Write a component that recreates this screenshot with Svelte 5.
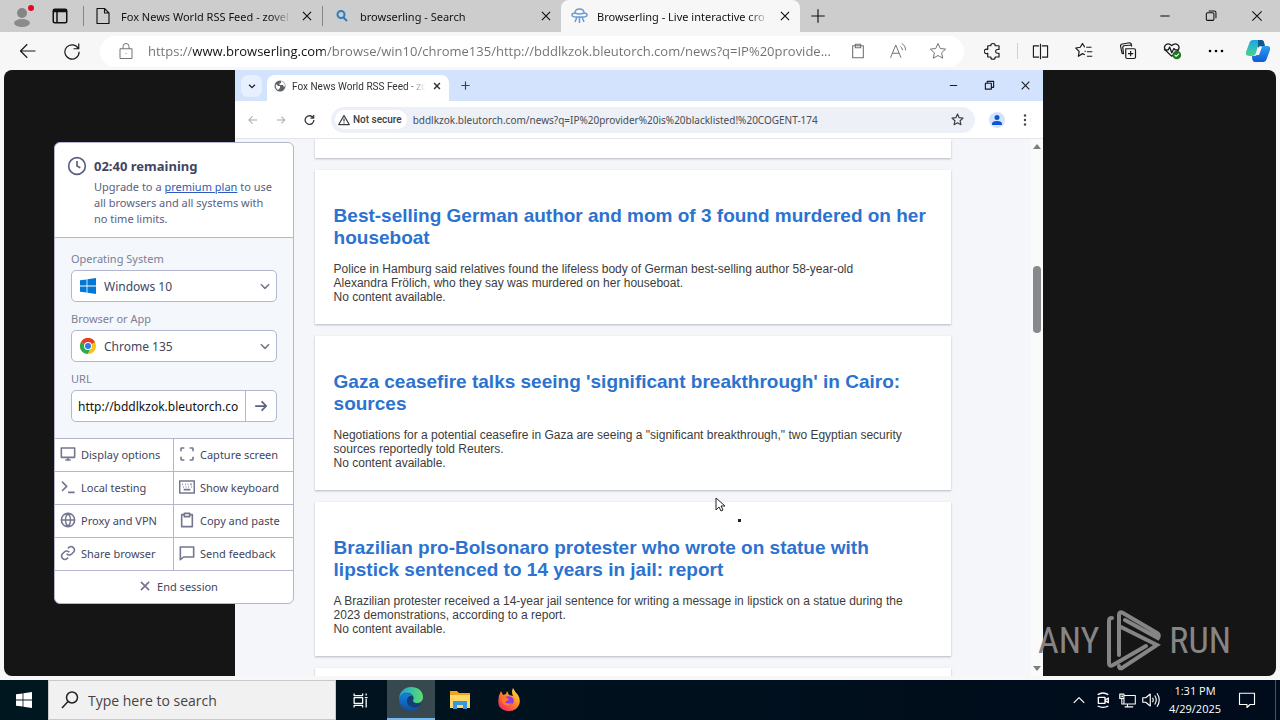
<script lang="ts">
  const articles = [
    {
      title: 'Best-selling German author and mom of 3 found murdered on her houseboat',
      text: 'Police in Hamburg said relatives found the lifeless body of German best-selling author 58-year-old Alexandra Frölich, who they say was murdered on her houseboat.',
    },
    {
      title: "Gaza ceasefire talks seeing 'significant breakthrough' in Cairo: sources",
      text: 'Negotiations for a potential ceasefire in Gaza are seeing a "significant breakthrough," two Egyptian security sources reportedly told Reuters.',
    },
    {
      title: 'Brazilian pro-Bolsonaro protester who wrote on statue with lipstick sentenced to 14 years in jail: report',
      text: 'A Brazilian protester received a 14-year jail sentence for writing a message in lipstick on a statue during the 2023 demonstrations, according to a report.',
    },
  ];

  const icons = {
    close: 'M5 5l14 14M19 5L5 19',
    plus: 'M12 3v18M3 12h18',
    minimize: 'M4 12h16',
    restore: 'M4 8.5a2 2 0 0 1 2-2h9a2 2 0 0 1 2 2v9a2 2 0 0 1-2 2H6a2 2 0 0 1-2-2zM8 3.5h9.5a3 3 0 0 1 3 3V16',
    back: 'M22 12H3M11 3l-9 9 9 9',
    forward: 'M2 12h19M13 4l8 8-8 8',
    reload: 'M20.5 9A9.5 9.5 0 1 0 21.5 13M21 2v7h-7',
    lock: 'M4 9h16v13H4zM8 9V6a4 4 0 0 1 8 0v3M12 15v1',
    page: 'M4 2h10l6 6v14H4zM14 2v6h6',
    panes: 'M3 5a2 2 0 0 1 2-2h14a2 2 0 0 1 2 2v14a2 2 0 0 1-2 2H5a2 2 0 0 1-2-2zM3 5h18M3 6h18M8 6v15',
    clipboard: 'M4 4h16v18H4zM8 2h8v5H8z',
    aloud: 'M2 21L9 4l7 17M4.500 15h9M15 6a6 6 0 0 1 3 5M17 2a10 10 0 0 1 5 9',
    star: 'M12 2l3 6.700 7.200.8-5.400 4.900 1.500 7.200L12 18l-6.300 3.600 1.500-7.200L1.800 9.500 9 8.700z',
    puzzle: 'M5 5h4a3 3 0 1 1 6 0h5v5h-2a2.500 2.500 0 0 0 0 5h2v5h-5a3 3 0 0 1-6 0H5v-5a3 3 0 1 1 0-5z',
    split: 'M10 4H2v16h8M14 4h8v16h-8M12 1v22',
    favorites: 'M22 7h-7M23 13h-7M23 19h-7M13 17l-3-1.500L4.500 19l1-6.500L1 8l6-1 3-5 3 5M14 12l-1 1',
    collections: 'M9 9h11a2 2 0 0 1 2 2v9a2 2 0 0 1-2 2h-9a2 2 0 0 1-2-2zM15.500 12v7M12 15.500h7M6 16l-2-1L2 5l1-2 11-2 2 1 1 4M6 16L5 7l1-2 11-1',
    heart: 'M12 20l-9-9C-.5 5 6-.5 12 5c6-5.500 12.500 0 9 6l-9 9M1 11h6l2-4 3 8 3-6 2 2h5',
    down: 'M5 9l7 7 7-7',
    up: 'M3 17l9-9 9 9',
    clock: 'M22 12a10 10 0 1 1-20 0a10 10 0 0 1 20 0zM12 6v6l4 2',
    display: 'M2 3h20v14H2zM12 17v4M8 21h8',
    capture: 'M8 3H4a1 1 0 0 0-1 1v4M16 3h4a1 1 0 0 1 1 1v4M21 16v4a1 1 0 0 1-1 1h-4M3 16v4a1 1 0 0 0 1 1h4',
    terminal: 'M3 4l7 7-7 7M12 20h10',
    keyboard: 'M1 3h22v18H1zM5 8h1M9 8h1M13 8h1M17 8h2M6 12h1M10 12h1M14 12h1M18 12h1M7 16h10',
    globe: 'M22 12a10 10 0 1 1-20 0a10 10 0 0 1 20 0zM2 12h20M12 2c5 6 5 14 0 20c-5-6-5-14 0-20z',
    paste: 'M8 4H4v18h16V4h-4M8 2h8v5H8z',
    link: 'M10 13a5 5 0 0 0 7.500.5l3-3a5 5 0 0 0-7-7L11.800 5M14 11a5 5 0 0 0-7.500-.5l-3 3a5 5 0 0 0 7 7l1.700-1.700',
    feedback: 'M2 3h20v15H7l-5 4z',
    warning: 'M12 3L1.500 21h21zM12 9v6M12 17v2',
    windowStack: 'M3 7h13v13H3zM7 7V3h14v13h-5',
    monitor: 'M7 5h16v12H7zM12 17v4M8 21h12M1 3h6v6H1zM4 9v8h3M3 5v2M5 5v2',
    volume: 'M1 9h4l6-5v16l-6-5H1zM14 9q2 3 0 6M17 6q4 6 0 12M20 3q6 9 0 18',
    record: 'M5 8h10v9H5zM15 12l5-3v7l-5-3M4 4q8-5 16 0M4 21q8 4 16 0',
    taskView: 'M3 2v3h12V2M3 22v-3h12v3M3 8h12v8H3zM20 2v3M20 10v12M18 8h4',
    notice: 'M2 3h20v15h-6l-4 4v-4H2z',
  };

  type IconName = keyof typeof icons;

  const tools: { icon: IconName; label: string }[] = [
    { icon: 'display', label: 'Display options' },
    { icon: 'capture', label: 'Capture screen' },
    { icon: 'terminal', label: 'Local testing' },
    { icon: 'keyboard', label: 'Show keyboard' },
    { icon: 'globe', label: 'Proxy and VPN' },
    { icon: 'paste', label: 'Copy and paste' },
    { icon: 'link', label: 'Share browser' },
    { icon: 'feedback', label: 'Send feedback' },
  ];

  let address = $state('https://www.browserling.com/browse/win10/chrome135/http://bddlkzok.bleutorch.com/news?q=IP%20provide...');
  let remoteAddress = $state('bddlkzok.bleutorch.com/news?q=IP%20provider%20is%20blacklisted!%20COGENT-174');
  let url = $state('http://bddlkzok.bleutorch.com/news?q=IP%20provider');
  let os = $state('Windows 10');
  let browser = $state('Chrome 135');
</script>

{#snippet icon(name: IconName, size = 16, weight = 1.5)}
  <svg class="icon" width={size} height={size} viewBox="0 0 24 24" stroke-width={weight} aria-hidden="true">
    <path d={icons[name]} />
  </svg>
{/snippet}

<div class="desktop">
  <header class="tab-bar">
    <button class="profile" aria-label="Profile">
      <svg width="20" height="22" viewBox="0 0 20 22">
        <circle cx="8" cy="8" r="5" fill="#858585" />
        <ellipse cx="8" cy="18" rx="8" ry="4" fill="#8b8b8b" />
        <circle cx="17" cy="3" r="3" fill="#e00b1c" />
      </svg>
    </button>
    <button class="tab-actions" aria-label="Tab actions">{@render icon('panes', 18, 2)}</button>
    <div class="tab">
      {@render icon('page', 18, 1.5)}
      <span class="tab-title">Fox News World RSS Feed - zovel</span>
      <button aria-label="Close tab">{@render icon('close', 14, 2)}</button>
    </div>
    <div class="tab">
      <svg class="bing" width="12" height="12" viewBox="0 0 12 12"><circle cx="5" cy="4.500" r="3.500" /><path d="M7.500 7.500L11 11" /></svg>
      <span class="tab-title">browserling - Search</span>
      <button aria-label="Close tab">{@render icon('close', 14, 2)}</button>
    </div>
    <div class="tab active">
      <svg class="ufo" width="17" height="16" viewBox="0 0 17 16">
        <path d="M4 5q0-4 4.500-4T13 5q3 0 3 2t-4 2H5Q1 9 1 7t3-2zM4 5q4.500 2 9 0M6 9l-2 5M8.500 9v6M11 9l2 5" />
      </svg>
      <span class="tab-title">Browserling - Live interactive cro</span>
      <button aria-label="Close tab">{@render icon('close', 14, 2)}</button>
    </div>
    <button class="new-tab" aria-label="New tab">{@render icon('plus', 18, 1.5)}</button>
    <div class="window-controls">
      <button aria-label="Minimize">{@render icon('minimize', 14, 1.8)}</button>
      <button aria-label="Restore">{@render icon('restore', 14, 1.8)}</button>
      <button aria-label="Close">{@render icon('close', 16, 1.6)}</button>
    </div>
  </header>

  <div class="toolbar">
    <button aria-label="Back">{@render icon('back', 18, 1.6)}</button>
    <button aria-label="Refresh">{@render icon('reload', 18, 1.6)}</button>
    <div class="address">
      <button class="site-info" aria-label="Site information">{@render icon('lock', 18, 1.3)}</button>
      <input class="address-input" aria-label="Address" bind:value={address} />
      <button aria-label="Clipboard">{@render icon('clipboard', 16, 1.6)}</button>
      <button aria-label="Read aloud">{@render icon('aloud', 18, 1.3)}</button>
      <button aria-label="Add to favorites">{@render icon('star', 18, 1.3)}</button>
    </div>
    <button class="extensions" aria-label="Extensions">{@render icon('puzzle', 18, 1.6)}</button>
    <button aria-label="Split screen">{@render icon('split', 17, 1.6)}</button>
    <button aria-label="Favorites">{@render icon('favorites', 18, 1.6)}</button>
    <button aria-label="Collections">{@render icon('collections', 18, 1.6)}</button>
    <button aria-label="Browser essentials">
      <svg width="19" height="18" viewBox="0 0 26 25" class="icon">
        <path d={icons.heart} stroke-width="1.800" />
        <circle cx="19" cy="18" r="6" fill="#1b7a1b" stroke="none" />
        <path d="M16 18l2 2 4-4" stroke="#fff" stroke-width="1.500" />
      </svg>
    </button>
    <button aria-label="More">
      <svg width="16" height="4" viewBox="0 0 16 4"><circle cx="2" cy="2" r="1.300" /><circle cx="8" cy="2" r="1.300" /><circle cx="14" cy="2" r="1.300" /></svg>
    </button>
    <button class="copilot" aria-label="Copilot">
      <svg width="24" height="22" viewBox="0 0 24 22">
        <defs>
          <linearGradient id="cpA" x1="0" y1="0" x2="0" y2="1"><stop offset="0" stop-color="#19a6e8" /><stop offset="1" stop-color="#4cd38c" /></linearGradient>
          <linearGradient id="cpB" x1="0" y1="0" x2="0" y2="1"><stop offset="0" stop-color="#2d9ff0" /><stop offset="1" stop-color="#0f5ad8" /></linearGradient>
        </defs>
        <path d="M7 0h8q3 0 3 4l-3 1q-3 0-4 4l-1 4q-1 3-4 3H3q-4 0-3-4L3 4q1-4 4-4z" fill="url(#cpA)" />
        <path d="M12 0h4q2 0 3 6h-4q-2 0-3 2z" fill="#12578f" />
        <path d="M17 22H9q-3 0-3-6h2q3 0 4-3l1-4q1-3 4-3h4q4 0 3 4l-3 8q-1 4-4 4z" fill="url(#cpB)" />
        <path d="M13 7h3l-3 8H9q2-1 2-3z" fill="#f7f7f7" />
      </svg>
    </button>
  </div>

  <main class="stage">
    <section class="remote" aria-label="Remote browser">
      <div class="remote-tabs">
        <button class="tab-search" aria-label="Search tabs">{@render icon('down', 10, 3)}</button>
        <div class="remote-tab">
          <svg width="12" height="12" viewBox="0 0 12 12">
            <circle cx="6" cy="6" r="5.500" fill="#5f6368" />
            <path d="M2 4l2 2h2v2l-2 2q-3-2-2-6zM7 1v2L5 4l1 1h3l1 2 1-1Q11 2 7 1z" fill="#fff" />
          </svg>
          <span class="tab-title">Fox News World RSS Feed - zo</span>
          <button aria-label="Close tab">{@render icon('close', 10, 3.500)}</button>
        </div>
        <button class="remote-new" aria-label="New tab">{@render icon('plus', 11, 2.500)}</button>
        <div class="remote-controls">
          <button aria-label="Minimize">{@render icon('minimize', 11, 2.500)}</button>
          <button aria-label="Restore">{@render icon('windowStack', 11, 2.500)}</button>
          <button aria-label="Close">{@render icon('close', 13, 2)}</button>
        </div>
      </div>
      <div class="remote-bar">
        <button class="dim" aria-label="Back">{@render icon('back', 10, 2.500)}</button>
        <button class="dim" aria-label="Forward">{@render icon('forward', 10, 2.500)}</button>
        <button aria-label="Reload">{@render icon('reload', 11, 3)}</button>
        <div class="omnibox">
          <button class="chip">{@render icon('warning', 12, 2.500)}Not secure</button>
          <input aria-label="Address" bind:value={remoteAddress} />
          <button class="bookmark" aria-label="Bookmark">{@render icon('star', 13, 2.200)}</button>
        </div>
        <button class="account" aria-label="Account">
          <svg width="16" height="16" viewBox="0 0 16 16"><circle cx="8" cy="8" r="8" fill="#d3e3fd" /><circle cx="8" cy="5.500" r="2.500" fill="#0b57d0" /><path d="M3 13v-1q0-3 5-3t5 3v1z" fill="#0b57d0" /></svg>
        </button>
        <button aria-label="Menu">
          <svg width="4" height="12" viewBox="0 0 4 12" fill="#444"><circle cx="2" cy="1.500" r="1.200" /><circle cx="2" cy="6" r="1.200" /><circle cx="2" cy="10.500" r="1.200" /></svg>
        </button>
      </div>
      <div class="remote-view">
        <div class="feed">
          <article class="tail"></article>
          {#each articles as article}
            <article>
              <h2><a href="#top">{article.title}</a></h2>
              <p>{article.text}<br />No content available.</p>
            </article>
          {/each}
          <article class="next"></article>
        </div>
        <div class="scrollbar">
          <svg width="8" height="5" viewBox="0 0 8 5"><path d="M0 5l4-5 4 5z" /></svg>
          <div class="track"><div class="thumb"></div></div>
          <svg width="8" height="5" viewBox="0 0 8 5"><path d="M0 0l4 5 4-5z" /></svg>
        </div>
      </div>
      <svg class="pointer" width="28" height="28" viewBox="0 0 28 28">
        <path d="M1 1v12l3-3 2 4 2-1-2-4h4z" fill="#fff" stroke="#222" />
        <rect x="23" y="22" width="3" height="3" fill="#222" />
      </svg>
    </section>

    <aside class="panel">
      <div class="session">
        {@render icon('clock', 20, 2)}
        <div>
          <strong>02:40 remaining</strong>
          <p>Upgrade to a <a href="#plan">premium plan</a> to use all browsers and all systems with no time limits.</p>
        </div>
      </div>
      <form class="settings" onsubmit={(e) => e.preventDefault()}>
        <label for="os">Operating System</label>
        <div class="field">
          <svg class="brand" width="16" height="16" viewBox="0 0 16 16" fill="#0078d4"><path d="M0 2.300L6.600 1.400v6.200H0zM7.400 1.300L16 0v7.600H7.400zM0 8.400h6.600v6.200L0 13.700zM7.400 8.400H16V16l-8.600-1.300z" /></svg>
          <select id="os" bind:value={os}><option>Windows 10</option><option>Windows 11</option></select>
          <span class="caret">{@render icon('down', 14, 2.800)}</span>
        </div>
        <label for="browser">Browser or App</label>
        <div class="field">
          <svg class="brand" width="16" height="16" viewBox="0 0 16 16">
            <circle cx="8" cy="8" r="8" fill="#fbc116" />
            <path d="M8 8L1 4a8 8 0 0 1 14 0z" fill="#e33b2e" />
            <path d="M8 8L1 4a8 8 0 0 0 6.500 12L11 10z" fill="#2da94f" />
            <circle cx="8" cy="8" r="4" fill="#fff" />
            <circle cx="8" cy="8" r="3" fill="#2a7de1" />
          </svg>
          <select id="browser" bind:value={browser}><option>Chrome 135</option><option>Chrome 134</option></select>
          <span class="caret">{@render icon('down', 14, 2.800)}</span>
        </div>
        <label for="url">URL</label>
        <div class="url-field">
          <input id="url" type="text" bind:value={url} />
          <button aria-label="Go">{@render icon('forward', 14, 3)}</button>
        </div>
      </form>
      <div class="tools">
        {#each tools as tool}
          <button>{@render icon(tool.icon, 16, 2.4)}{tool.label}</button>
        {/each}
        <button class="end">{@render icon('close', 14, 2.800)}End session</button>
      </div>
    </aside>

    <div class="watermark">
      <span>ANY</span>
      <svg width="54" height="62" viewBox="0 0 54 62">
        <path d="M5 8Q2 8 2 11v42q0 4 4 2l33-19" />
        <path d="M12 45V5q0-4 4-2l34 20q3 2 1 5l-33-18" />
        <path d="M14 17l36 18L15 58q-3 1-3-2" />
      </svg>
      <span>RUN</span>
    </div>
  </main>

  <footer class="taskbar">
    <button class="start" aria-label="Start">
      <svg width="16" height="16" viewBox="0 0 16 16" fill="#fff"><path d="M0 2.300L6.600 1.400v6.200H0zM7.400 1.300L16 0v7.600H7.400zM0 8.400h6.600v6.200L0 13.700zM7.400 8.400H16V16l-8.600-1.300z" /></svg>
    </button>
    <label class="search">
      <svg class="icon" width="18" height="18" viewBox="0 0 18 18" stroke-width="1.500"><circle cx="11" cy="6.500" r="5.500" /><path d="M7 10.500L1 17" /></svg>
      <input type="text" placeholder="Type here to search" aria-label="Search" />
    </label>
    <button class="app" aria-label="Task View">{@render icon('taskView', 17, 1.8)}</button>
    <button class="app running" aria-label="Edge">
      <svg width="24" height="24" viewBox="0 0 24 24">
        <defs>
          <linearGradient id="edA" x1="0" y1="0" x2="1" y2="0"><stop offset="0" stop-color="#1d9fe0" /><stop offset="1" stop-color="#5be06a" /></linearGradient>
          <linearGradient id="edB" x1="0" y1="0" x2="0" y2="1"><stop offset="0" stop-color="#1583d8" /><stop offset="1" stop-color="#0f4fa5" /></linearGradient>
        </defs>
        <path d="M0 11C1 4 6 0 12 0c7 0 12 4 12 10 0 4-3 6-6 6-3 0-5-1-4-3 1-1 1-2 0-4C11 4 3 5 0 11z" fill="url(#edA)" />
        <path d="M0 11C3 5 11 5 14 9c-4-1-6 2-6 5 0 5 6 8 13 5-3 5-10 6-15 3-4-2-6-6-6-11z" fill="url(#edB)" />
        <path d="M8 14c0-3 2-5 5-5 2 2 0 3 1 5 1 3 5 3 8 2-1 4-6 6-9 4-3-1-5-3-5-6z" fill="#123f78" />
      </svg>
    </button>
    <button class="app" aria-label="File Explorer">
      <svg width="22" height="20" viewBox="0 0 22 20">
        <path d="M1 1h7l2 2h11v15H1z" fill="#f0a51c" />
        <path d="M1 5h20v13H1z" fill="#ffd866" />
        <path d="M4 19v-8h14v8h-4v-4H8v4z" fill="#3a96dd" />
      </svg>
    </button>
    <button class="app" aria-label="Firefox">
      <svg width="22" height="24" viewBox="0 0 22 24">
        <defs><linearGradient id="ff" x1="1" y1="0" x2="0.200" y2="1"><stop offset="0" stop-color="#fff04a" /><stop offset="0.500" stop-color="#ff8a1f" /><stop offset="1" stop-color="#f0246e" /></linearGradient></defs>
        <path d="M3 3l2 4 3-1 1-3 2 4 4 1q-2-4 0-8 2 4 5 7 3 5 1 10-3 6-10 6T1 18Q-1 10 3 3z" fill="url(#ff)" />
        <path d="M7 9q5-2 8 1 2 4-1 6-4 2-7-1l-1-3 4-1z" fill="#8a3be2" />
        <path d="M4 10q3-2 5 0l2 2-4 2q4 3 7 0-2 5-7 3-4-2-3-7z" fill="#ff7a22" />
      </svg>
    </button>
    <div class="tray">
      <button aria-label="Show hidden icons">{@render icon('up', 14, 2)}</button>
      <button aria-label="Meet now">{@render icon('record', 16, 2)}</button>
      <button aria-label="Network">{@render icon('monitor', 17, 1.500)}</button>
      <button aria-label="Volume">{@render icon('volume', 18, 1.500)}</button>
      <button class="clock"><span>1:31 PM</span><span>4/29/2025</span></button>
      <button class="notifications" aria-label="Notifications">{@render icon('notice', 18, 1.500)}</button>
    </div>
  </footer>
</div>

<style>
  :global(body) {
    background: #f7f7f7;
  }

  .desktop {
    display: flex;
    flex-direction: column;
    height: 100vh;
    overflow: hidden;
    font-family: "Noto Sans", "Open Sans", sans-serif;
    font-size: 11px;
    color: #1a1a1a;
  }

  .desktop :global(*) {
    box-sizing: border-box;
  }

  button, input, select {
    font: inherit;
    color: inherit;
    background: none;
    border: 0;
    padding: 0;
    margin: 0;
    min-width: 0;
    outline: none;
  }

  button {
    display: flex;
    align-items: center;
    justify-content: center;
    flex-shrink: 0;
  }

  svg {
    flex-shrink: 0;
  }

  .icon {
    fill: none;
    stroke: currentColor;
    stroke-linejoin: round;
  }

  .tab-bar {
    display: flex;
    align-items: center;
    height: 32px;
    background: #cdcdcd;
    color: #111;
  }

  .profile {
    width: 48px;
  }

  .tab-actions {
    width: 24px;
    margin-right: 11px;
  }

  .tab {
    display: flex;
    align-items: center;
    flex: 0 1 239px;
    height: 20px;
    min-width: 0;
    padding: 0 8px 0 10px;
    gap: 9px;
    border-left: 1px solid #858585;
  }

  .tab.active {
    height: 32px;
    background: #f7f7f7;
    border-left: 0;
    border-radius: 8px 8px 0 0;
  }

  .tab-title {
    flex: 1;
    overflow: hidden;
    white-space: nowrap;
    mask-image: linear-gradient(to right, #000 calc(100% - 20px), transparent);
  }

  .bing, .ufo {
    fill: none;
    stroke: #2f7dbd;
    stroke-width: 2;
    margin: 0 3px;
  }

  .ufo {
    stroke: #6d9bd1;
    stroke-width: 1.5;
    margin: 0;
  }

  .new-tab {
    width: 36px;
  }

  .window-controls {
    display: flex;
    margin-left: auto;
  }

  .window-controls button {
    width: 46px;
  }

  .toolbar {
    display: flex;
    align-items: center;
    height: 38px;
    padding: 0 2px 0 6px;
    background: #f7f7f7;
  }

  .toolbar button {
    width: 44px;
    height: 30px;
  }

  .address {
    display: flex;
    flex: 1;
    align-items: center;
    min-width: 0;
    height: 31px;
    margin: 0 5px 0 6px;
    padding: 0 6px 0 4px;
    background: #fff;
    border-radius: 16px;
    color: #707070;
  }

  .toolbar .address button {
    width: 40px;
  }

  .toolbar .address .site-info {
    width: 44px;
  }

  .address-input {
    flex: 1;
    font-family: "Open Sans", sans-serif;
    font-size: 13px;
    color: transparent;
    background: linear-gradient(to right, #707070 45px, #111 45px, #111 177px, #707070 177px);
    background-clip: text;
  }

  .toolbar .extensions {
    width: 49px;
    border-right: 1px solid #d0d0d0;
    height: 16px;
  }

  .toolbar .copilot {
    width: 40px;
  }

  .stage {
    position: relative;
    display: flex;
    justify-content: center;
    flex: 1;
    min-height: 0;
    margin: 0 4px 4px;
    padding-right: 2px;
    overflow: hidden;
    background: #151515;
    border-radius: 8px;
  }

  .remote {
    position: relative;
    display: flex;
    flex-direction: column;
    height: 100%;
    aspect-ratio: 4 / 3;
    background: #fff;
    font-family: Roboto, "Open Sans", sans-serif;
    font-size: 10px;
  }

  .remote-tabs {
    display: flex;
    align-items: center;
    height: 31px;
    padding-left: 6px;
    background: #d3e3fd;
  }

  .tab-search {
    width: 21px;
    height: 22px;
    background: #e6f0ff;
    border-radius: 7px;
  }

  .remote-tab {
    display: flex;
    align-items: center;
    align-self: flex-end;
    flex: 0 1 182px;
    height: 26px;
    min-width: 0;
    margin-left: 5px;
    padding: 0 7px 4px;
    gap: 6px;
    background: #fff;
    border-radius: 8px 8px 0 0;
    color: #333;
  }

  .remote-new {
    width: 32px;
    color: #34415a;
  }

  .remote-controls {
    display: flex;
    margin-left: auto;
  }

  .remote-controls button {
    width: 36px;
  }

  .remote-bar {
    display: flex;
    align-items: center;
    height: 38px;
    padding: 0 4px;
    border-bottom: 1px solid #e4e6ea;
  }

  .remote-bar button {
    width: 28px;
    color: #3c4043;
  }

  .remote-bar .dim {
    color: #a5a8ac;
  }

  .omnibox {
    display: flex;
    align-items: center;
    flex: 1;
    min-width: 0;
    height: 26px;
    margin: 0 8px;
    padding: 0 4px;
    background: #edf0f6;
    border-radius: 13px;
  }

  .remote-bar .chip {
    width: auto;
    height: 19px;
    padding: 0 5px 0 3px;
    gap: 3px;
    background: #fff;
    border-radius: 10px;
    font-weight: 500;
  }

  .omnibox input {
    flex: 1;
    padding-left: 6px;
    font-family: "Noto Sans", "Open Sans", sans-serif;
    color: #4a4d52;
  }

  .remote-view {
    display: flex;
    flex: 1;
    min-height: 0;
  }

  .feed {
    flex: 1;
    overflow: hidden;
    background: #f4f6fa;
    font-family: "Liberation Sans", Arial, sans-serif;
  }

  article {
    width: 80%;
    min-height: 19px;
    margin: 0 auto 12px;
    padding: 35px 19px 20px;
    background: #fff;
    box-shadow: 0 1px 2px rgba(60, 64, 80, 0.35);
  }

  .tail, .next {
    padding: 0;
  }

  h2 {
    margin: 0 0 13px;
    font-size: 19px;
    line-height: 22px;
  }

  h2 a {
    color: #2c72cf;
    text-decoration: none;
  }

  article p {
    margin: 0;
    padding-right: 25px;
    font-size: 12px;
    line-height: 14px;
    color: #3c3c3c;
  }

  .scrollbar {
    display: flex;
    flex-direction: column;
    align-items: center;
    width: 12px;
    padding: 5px 0;
    background: #fafafa;
    fill: #7d7d7d;
  }

  .track {
    flex: 1;
    width: 8px;
  }

  .thumb {
    height: 13%;
    margin-top: 117px;
    background: #87898c;
    border-radius: 4px;
  }

  .pointer {
    position: absolute;
    left: 480px;
    top: 427px;
  }

  .panel {
    position: absolute;
    left: 50px;
    top: 72px;
    width: 240px;
    overflow: hidden;
    background: #fff;
    border: 1px solid #b3b6cd;
    border-radius: 6px;
    color: #41465f;
  }

  .session {
    display: flex;
    gap: 7px;
    padding: 13px 16px 10px 12px;
    color: #5c6080;
  }

  .session strong {
    display: block;
    font-size: 13px;
    line-height: 20px;
    color: #41465f;
  }

  .session p {
    margin: 3px 0 0;
    line-height: 16px;
  }

  .session a {
    color: #2d59b8;
  }

  .settings {
    padding: 13px 16px 16px;
    background: #f4f7fb;
    border-top: 1px solid #b3b6cd;
  }

  .settings label {
    display: block;
    line-height: 16px;
    margin-bottom: 3px;
    color: #7b7f96;
  }

  .field, .url-field {
    position: relative;
    display: flex;
    align-items: center;
    height: 32px;
    margin-bottom: 9px;
    background: #fff;
    border: 1px solid #b3b6cd;
    border-radius: 5px;
  }

  .field select {
    appearance: none;
    width: 100%;
    height: 30px;
    padding: 0 28px 0 32px;
    font-size: 12px;
  }

  .brand, .caret {
    position: absolute;
    left: 8px;
    pointer-events: none;
  }

  .caret {
    display: flex;
    left: auto;
    right: 4px;
    color: #777a8b;
  }

  .url-field {
    margin-bottom: 0;
  }

  .url-field input {
    flex: 1;
    margin: 0 7px 0 6px;
    font-size: 12px;
    color: #111;
  }

  .url-field button {
    width: 31px;
    height: 30px;
    border-left: 1px solid #b3b6cd;
    color: #5c6080;
  }

  .tools {
    display: grid;
    grid-template-columns: 119px 1fr;
  }

  .tools button {
    justify-content: flex-start;
    height: 33px;
    padding: 0 0 2px 5px;
    gap: 5px;
    border-top: 1px solid #b3b6cd;
    white-space: nowrap;
  }

  .tools button:nth-child(odd) {
    border-right: 1px solid #b3b6cd;
  }

  .tools .icon {
    color: #73768f;
  }

  .tools .end, .tools .end:nth-child(odd) {
    grid-column: 1 / -1;
    justify-content: center;
    padding-left: 8px;
    border-right: 0;
  }

  .watermark {
    position: absolute;
    right: 45px;
    bottom: 4px;
    display: flex;
    align-items: center;
    gap: 8px;
    color: #858585;
    font-family: "Liberation Sans Narrow", "Roboto Condensed", "Liberation Sans", sans-serif;
    font-size: 36px;
    line-height: 62px;
  }

  .watermark svg {
    fill: none;
    stroke: currentColor;
    stroke-width: 4;
    stroke-linecap: round;
  }

  .taskbar {
    display: flex;
    height: 40px;
    background: linear-gradient(to right, #001720, #000b1b);
    color: #fff;
    font-family: "Open Sans", "Noto Sans", sans-serif;
  }

  .start {
    width: 48px;
  }

  .search {
    display: flex;
    align-items: center;
    flex: 0 1 288px;
    gap: 9px;
    padding: 0 12px;
    background: #f1f1f1;
    border: 1px solid #c9c9c9;
    color: #222;
  }

  .search input {
    flex: 1;
    font-size: 14px;
  }

  .search input::placeholder {
    color: #444;
  }

  .app {
    width: 49px;
  }

  .running {
    margin-left: 2px;
    width: 48px;
    background: #37484f;
    border-bottom: 2px solid #76b9ed;
  }

  .tray {
    display: flex;
    margin-left: auto;
    padding-right: 4px;
  }

  .tray button {
    width: 24px;
  }

  .tray .clock {
    flex-direction: column;
    width: 64px;
    line-height: 18px;
  }

  .tray .notifications {
    width: 49px;
    padding-right: 8px;
    border-right: 1px solid #4a5460;
  }
</style>
